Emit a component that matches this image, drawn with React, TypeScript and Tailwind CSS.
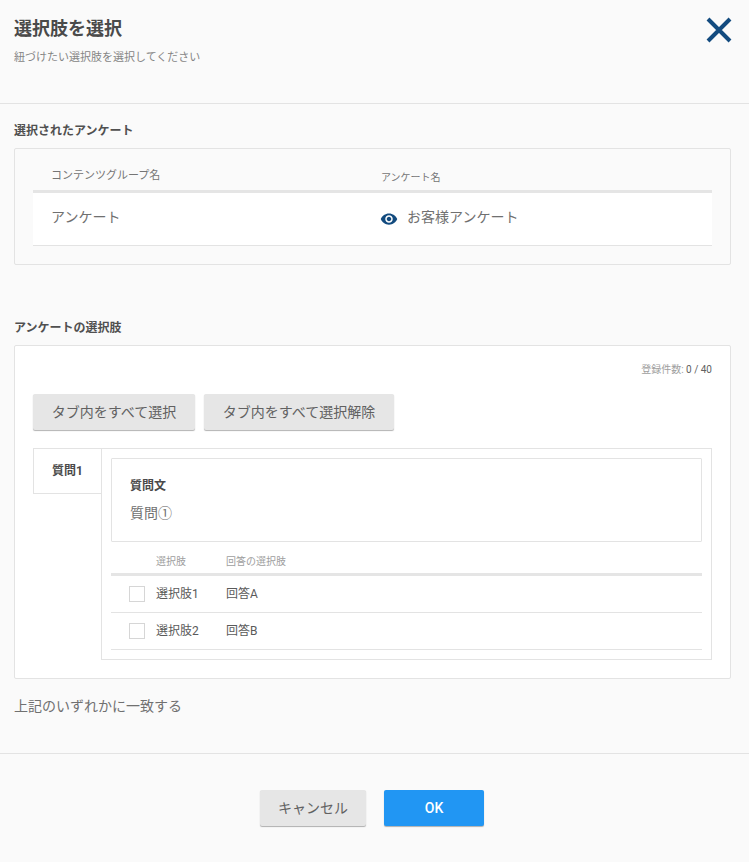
import type { ReactNode } from 'react'

function SectionLabel({ children }: { children: ReactNode }) {
  return <h2 className="text-[12px] leading-[18px] font-bold text-[#505050]">{children}</h2>
}

function GrayButton({ children, className = '' }: { children: ReactNode; className?: string }) {
  return (
    <button className={`h-9 bg-[#e6e6e6] rounded-[2px] text-[14px] tracking-normal text-[#616161] shadow-[0_1px_1px_rgba(0,0,0,0.3)] ${className}`}>
      {children}
    </button>
  )
}

const options = [
  { name: '選択肢1', answer: '回答A' },
  { name: '選択肢2', answer: '回答B' },
]

export default function App() {
  return (
    <div className="w-[749px] h-[862px] overflow-hidden bg-[#fafafa] text-[#424242] font-['Roboto','Noto_Sans_CJK_JP',sans-serif]">
      {/* header */}
      <header className="h-[104px] border-b border-[#e3e3e3] px-[14px] pt-[17px] flex justify-between">
        <div>
          <h1 className="text-[18px] leading-[24px] font-bold text-[#4a4a4a]">選択肢を選択</h1>
          <p className="mt-[9px] text-[11px] leading-[16px] text-[#858585]">紐づけたい選択肢を選択してください</p>
        </div>
        <button className="w-[26px] h-[26px] mr-[3px]">
          <svg viewBox="0 0 26 26" className="w-[26px] h-[26px]" fill="none" stroke="#134b7f" strokeWidth="4">
            <path d="M2 2 L24 24 M24 2 L2 24" />
          </svg>
        </button>
      </header>

      <main className="pl-[14px] pr-[18px]">
        <div className="pt-[18px]">
          <SectionLabel>選択されたアンケート</SectionLabel>
        </div>
        <section className="mt-[8px] h-[117px] border border-[#e3e3e3] rounded-[2px] px-[18px] pt-[12px]">
          <div className="grid grid-cols-[348px_1fr] h-[29px] border-b-[3px] border-[#e5e5e5] text-[#757575] box-content -mb-[3px]">
            <div className="pl-[18px] text-[11px] leading-[30px]">コンテンツグループ名</div>
            <div className="text-[10px] leading-[33px]">アンケート名</div>
          </div>
          <div className="mt-[3px] grid grid-cols-[348px_1fr] h-[53px] bg-white border-b border-[#e3e3e3] items-center text-[14px] text-[#707070]">
            <div className="pl-[18px] pb-[3px]">アンケート</div>
            <div className="flex items-center gap-[9px] -ml-[1px]">
              <svg viewBox="0 0 24 24" className="w-[18px] h-[18px]" fill="#134b7f">
                <path d="M12 4.5C7 4.5 2.73 7.61 1 12c1.73 4.39 6 7.5 11 7.5s9.27-3.11 11-7.5c-1.73-4.39-6-7.5-11-7.5zM12 17c-2.76 0-5-2.24-5-5s2.24-5 5-5 5 2.24 5 5-2.24 5-5 5zm0-8c-1.66 0-3 1.34-3 3s1.34 3 3 3 3-1.34 3-3-1.34-3-3-3z" />
              </svg>
              <span className="pb-[3px]">お客様アンケート</span>
            </div>
          </div>
        </section>

        <div className="pt-[54px]">
          <SectionLabel>アンケートの選択肢</SectionLabel>
        </div>
        <section className="mt-[8px] h-[334px] bg-white border border-[#e3e3e3] rounded-[2px] px-[18px] pt-[16px]">
          <p className="text-right text-[10px] leading-[15px] text-[#9e9e9e]">
            登録件数: <span className="text-[#616161]">0 / 40</span>
          </p>
          <div className="mt-[17px] flex gap-[9px]">
            <GrayButton className="w-[162px]">タブ内をすべて選択</GrayButton>
            <GrayButton className="w-[190px]">タブ内をすべて選択解除</GrayButton>
          </div>

          {/* tabs */}
          <div className="mt-[18px] flex">
            <div className="w-[68px] h-[46px] shrink-0 border-t border-l border-b border-[#e3e3e3] pl-[18px] pt-[13px] text-[12px] leading-[18px] font-bold text-[#4a4a4a]">
              質問1
            </div>
            <div className="flex-1 h-[212px] border border-[#e3e3e3] p-[9px]">
              <div className="h-[84px] border border-[#e3e3e3] rounded-[1px] px-[18px] pt-[18px]">
                <p className="text-[12px] leading-[18px] font-bold text-[#4a4a4a]">質問文</p>
                <p className="mt-[8px] text-[14px] leading-[20px] text-[#707070]">質問①</p>
              </div>
              <div className="grid grid-cols-[115px_1fr] h-[31px] border-b-[3px] border-[#e5e5e5] box-content -mb-[3px] text-[10px] leading-[40px] text-[#9e9e9e]">
                <div className="pl-[45px]">選択肢</div>
                <div>回答の選択肢</div>
              </div>
              <div className="mt-[3px]">
                {options.map((o) => (
                  <div key={o.name} className="grid grid-cols-[115px_1fr] h-[37px] border-b border-[#e3e3e3] items-center text-[12px] text-[#5a5a5a]">
                    <div className="flex items-center pl-[18px] gap-[11px]">
                      <span className="w-[16px] h-[16px] bg-white border border-[#d6d6d6]" />
                      <span>{o.name}</span>
                    </div>
                    <div>{o.answer}</div>
                  </div>
                ))}
              </div>
            </div>
          </div>
        </section>

        <p className="mt-[17px] text-[14px] leading-[20px] text-[#707070]">上記のいずれかに一致する</p>
      </main>

      <footer className="mt-[37px] border-t border-[#e3e3e3] pt-[36px] pr-[5px] flex justify-center gap-[18px]">
        <GrayButton className="w-[106px]">キャンセル</GrayButton>
        <button className="w-[100px] h-9 bg-[#2196f3] rounded-[2px] text-[14px] font-medium text-white shadow-[0_1px_1px_rgba(0,0,0,0.3)]">
          OK
        </button>
      </footer>
    </div>
  )
}
